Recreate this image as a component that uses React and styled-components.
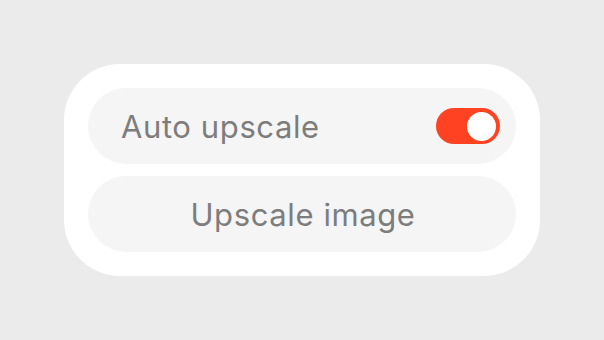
import React, { useState } from "react";
import styled, { createGlobalStyle } from "styled-components";

const GlobalStyle = createGlobalStyle`
  html, body {
    margin: 0;
    padding: 0;
    background: #ebebeb;
  }
  body {
    font-family: Inter, "Noto Sans", sans-serif;
  }
`;

const Page = styled.div`
  width: 604px;
  height: 340px;
  display: flex;
  align-items: center;
  justify-content: center;
`;

const Card = styled.div`
  width: 428px;
  padding: 24px;
  background: #ffffff;
  border-radius: 56px;
  display: flex;
  flex-direction: column;
  gap: 12px;
`;

const Row = styled.div`
  height: 76px;
  border-radius: 38px;
  background: #f5f5f5;
  display: flex;
  align-items: center;
  justify-content: ${p => (p.center ? "center" : "space-between")};
  padding: 0 16px 0 33px;
  box-sizing: border-box;
  cursor: pointer;
`;

const Label = styled.span`
  font-size: 31px;
  line-height: 1;
  color: #7d7d7d;
  letter-spacing: 0.6px;
`;

const ButtonRow = styled(Row)`
  padding: 0 0 0 2px;
`;

const Switch = styled.div`
  width: 64px;
  height: 36px;
  border-radius: 18px;
  background: ${p => (p.on ? "#ff4322" : "#d4d4d4")};
  display: flex;
  align-items: center;
  justify-content: ${p => (p.on ? "flex-end" : "flex-start")};
  padding: 0 4px;
  box-sizing: border-box;
`;

const Knob = styled.div`
  width: 29px;
  height: 29px;
  border-radius: 50%;
  background: #ffffff;
`;

export default function App() {
  const [auto, setAuto] = useState(true);

  return (
    <Page>
      <GlobalStyle />
      <Card>
        <Row onClick={() => setAuto(!auto)}>
          <Label>Auto upscale</Label>
          <Switch on={auto}>
            <Knob />
          </Switch>
        </Row>
        <ButtonRow center>
          <Label>Upscale image</Label>
        </ButtonRow>
      </Card>
    </Page>
  );
}
